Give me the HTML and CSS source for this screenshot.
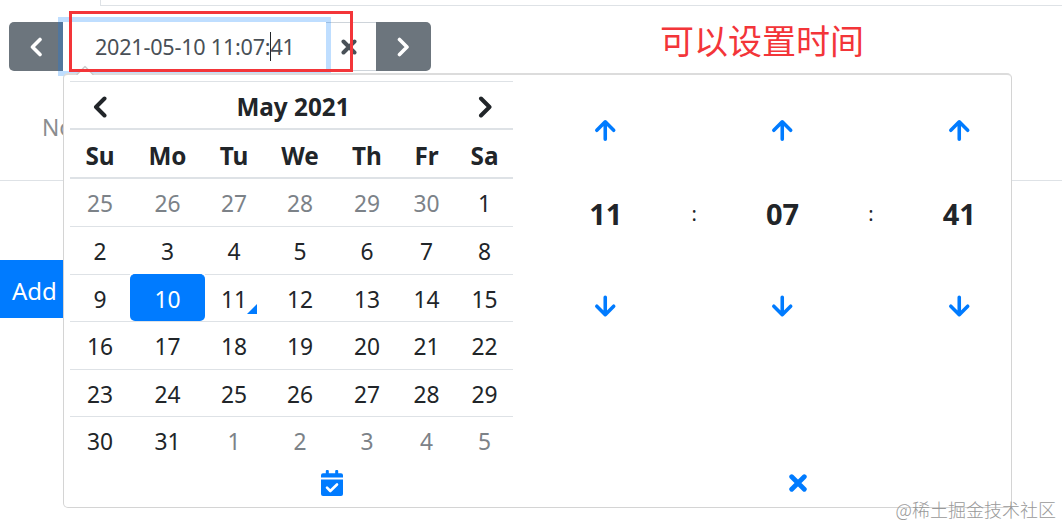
FILE: index.html
```
<!DOCTYPE html>
<html lang="en">
<head>
    <meta charset="UTF-8">
    <meta name="viewport" content="width=device-width, initial-scale=1.0">
    <title>Date Time Picker</title>
    <link rel="stylesheet" href="styles.css">
</head>
<body>

    <div class="top-line"></div>

    <div class="input-group">
        <button class="step-btn step-prev" aria-label="Previous">
            <svg width="13" height="20" viewBox="0 0 13 20"><path d="M10 2.5L2.5 10l7.5 7.5"/></svg>
        </button>
        <div class="date-input">2021-05-10 11:07:<span class="cursor"></span>41</div>
        <button class="clear-btn" aria-label="Clear">
            <svg width="16" height="16" viewBox="0 0 16 16"><path d="M2.5 2.5l11 11M13.5 2.5l-11 11"/></svg>
        </button>
        <button class="step-btn step-next" aria-label="Next">
            <svg width="13" height="20" viewBox="0 0 13 20"><path d="M2.5 2.5L10 10l-7.5 7.5"/></svg>
        </button>
    </div>

    <div class="empty-row">No</div>
    <button class="add-btn">Add</button>

    <div class="picker">
        <svg class="caret" width="18" height="10" viewBox="0 0 18 10"><path class="caret-fill" d="M1 10L9 2l8 8z"/><path class="caret-line" d="M1 9.5L9 1.5l8 8"/></svg>

        <div class="picker-body">
            <table class="calendar">
                <colgroup>
                    <col class="col-su"><col class="col-mo"><col class="col-tu"><col class="col-we"><col class="col-th"><col class="col-fr"><col class="col-sa">
                </colgroup>
                <thead>
                    <tr class="month-row">
                        <th><svg width="16" height="22" viewBox="0 0 16 22"><path d="M12.5 2.5L4 11l8.5 8.5"/></svg></th>
                        <th colspan="5">May 2021</th>
                        <th><svg width="16" height="22" viewBox="0 0 16 22"><path d="M4 2.5l8.5 8.5L4 19.5"/></svg></th>
                    </tr>
                    <tr class="week-row"><th>Su</th><th>Mo</th><th>Tu</th><th>We</th><th>Th</th><th>Fr</th><th>Sa</th></tr>
                </thead>
                <tbody>
                    <tr><td class="muted">25</td><td class="muted">26</td><td class="muted">27</td><td class="muted">28</td><td class="muted">29</td><td class="muted">30</td><td>1</td></tr>
                    <tr><td>2</td><td>3</td><td>4</td><td>5</td><td>6</td><td>7</td><td>8</td></tr>
                    <tr><td>9</td><td class="active">10</td><td class="today">11</td><td>12</td><td>13</td><td>14</td><td>15</td></tr>
                    <tr><td>16</td><td>17</td><td>18</td><td>19</td><td>20</td><td>21</td><td>22</td></tr>
                    <tr><td>23</td><td>24</td><td>25</td><td>26</td><td>27</td><td>28</td><td>29</td></tr>
                    <tr><td>30</td><td>31</td><td class="muted">1</td><td class="muted">2</td><td class="muted">3</td><td class="muted">4</td><td class="muted">5</td></tr>
                </tbody>
            </table>

            <div class="time">
                <svg class="arrow" viewBox="0 0 24 24"><path d="M12 21.5V3M3 12l9-9 9 9"/></svg>
                <span></span>
                <svg class="arrow" viewBox="0 0 24 24"><path d="M12 21.5V3M3 12l9-9 9 9"/></svg>
                <span></span>
                <svg class="arrow" viewBox="0 0 24 24"><path d="M12 21.5V3M3 12l9-9 9 9"/></svg>

                <b>11</b>
                <span>:</span>
                <b>07</b>
                <span>:</span>
                <b>41</b>

                <svg class="arrow" viewBox="0 0 24 24"><path d="M12 2.5V21M3 12l9 9 9-9"/></svg>
                <span></span>
                <svg class="arrow" viewBox="0 0 24 24"><path d="M12 2.5V21M3 12l9 9 9-9"/></svg>
                <span></span>
                <svg class="arrow" viewBox="0 0 24 24"><path d="M12 2.5V21M3 12l9 9 9-9"/></svg>
            </div>
        </div>

        <div class="picker-footer">
            <svg width="22" height="26" viewBox="0 0 22 26">
                <path class="solid" d="M0 7.5V5.3a2 2 0 0 1 2-2h2.8V1q0-1 1-1h1q1 0 1 1v2.3h6.4V1q0-1 1-1h1q1 0 1 1v2.3H20a2 2 0 0 1 2 2v2.2z"/>
                <path class="solid" d="M0 9.5h22V24a2 2 0 0 1-2 2H2a2 2 0 0 1-2-2z"/>
                <path class="check" d="M6 17.6l3.3 3.4 6.7-6.5"/>
            </svg>
            <svg class="close" width="18" height="18" viewBox="0 0 18 18"><path d="M2.7 2.7l12.6 12.6M15.3 2.7L2.7 15.3"/></svg>
        </div>
    </div>

    <!-- notes on top of the page -->
    <div class="red-box"></div>
    <div class="note">可以设置时间</div>
    <div class="watermark">@稀土掘金技术社区</div>

</body>
</html>
```
FILE: styles.css
```
* {
    box-sizing: border-box;
}

body {
    margin: 0;
    position: relative;
    width: 1062px;
    height: 526px;
    overflow: hidden;
    background: #fff;
    color: #212529;
    font-family: "Noto Sans", "Noto Sans CJK SC", sans-serif;
    font-size: 22.8px;
}

svg {
    display: block;
    fill: none;
    stroke: currentColor;
    stroke-linecap: round;
    stroke-linejoin: round;
}

button {
    border: none;
    padding: 0;
    font: inherit;
}

.top-line {
    height: 6px;
    margin-left: 100px;
    border-left: 1px solid #dee2e6;
    border-bottom: 1px solid #dee2e6;
}

/* Input with buttons */
.input-group {
    display: flex;
    width: 422px;
    height: 49px;
    margin: 16px 0 0 9px;
}

.step-btn {
    display: flex;
    align-items: center;
    justify-content: center;
    width: 55px;
    background: #6c757d;
    color: #fff;
    stroke-width: 3.6;
}

.step-prev {
    width: 54px;
    border-radius: 5px 0 0 5px;
}

.step-next {
    border-radius: 0 5px 5px 0;
}

.date-input {
    position: relative;
    display: flex;
    align-items: center;
    width: 263px;
    padding: 0 0 1px 32px;
    background: #fff;
    box-shadow: 0 0 0 5px rgba(0, 123, 255, 0.25);
    color: #495057;
    font-size: 21.6px;
    letter-spacing: -0.23px;
    white-space: pre;
}

.cursor {
    width: 1px;
    height: 29px;
    margin-right: -1px;
    background: #212529;
}

.clear-btn {
    display: flex;
    align-items: center;
    width: 50px;
    padding-left: 15px;
    border: solid #ced4da;
    border-width: 1px 0;
    background: #fff;
    color: #495057;
    stroke-width: 4;
}

/* Page behind the picker */
.empty-row {
    height: 110px;
    padding: 40px 0 0 42px;
    border-bottom: 1px solid #dee2e6;
    color: #8a8d90;
    line-height: 34px;
}

.add-btn {
    display: block;
    width: 90px;
    height: 58px;
    margin-top: 79px;
    padding: 2px 0 0 12px;
    background: #007bff;
    color: #fff;
    font-size: 24px;
    text-align: left;
}

/* Picker */
.picker {
    position: absolute;
    left: 63px;
    top: 73px;
    width: 949px;
    height: 435px;
    padding: 7px 6px 0;
    background: #fff;
    border: 1px solid #d4d4d4;
    border-top: 2px solid #dcdcdc;
    border-radius: 5px;
}

.caret {
    position: absolute;
    left: 12px;
    top: -10px;
}

.caret-fill {
    fill: #fff;
    stroke: none;
}

.caret-line {
    stroke: #ccc;
    stroke-width: 1.5;
}

.picker-body {
    display: flex;
    height: 383px;
}

.calendar {
    table-layout: fixed;
    width: 443px;
    height: 382px;
    margin-top: -1px;
    border-spacing: 0;
    text-align: center;
    line-height: 30px;
}

.col-su { width: 60px; }
.col-mo { width: 75px; }
.col-tu { width: 58px; }
.col-we { width: 74px; }
.col-th { width: 60px; }
.col-fr { width: 59px; }
.col-sa { width: 57px; }

.calendar th,
.calendar td {
    height: 47.5px;
    padding: 4px 0 0;
    border-top: 1px solid #dee2e6;
}

.calendar th {
    padding-top: 5px;
    border-bottom: 2px solid #dee2e6;
    font-size: 24.3px;
}

.calendar .month-row th {
    height: 49px;
    padding-top: 4px;
}

.calendar .week-row th {
    height: 48.5px;
    border-top: none;
}

.calendar tbody tr:first-child td {
    border-top: none;
}

.calendar th svg {
    margin: 0 auto;
    stroke-width: 4;
}

.calendar .muted {
    color: #7c8288;
}

.calendar .active {
    background: #007bff;
    border-radius: 5px;
    border-top-color: #007bff;
    color: #fff;
}

.calendar .today {
    position: relative;
}

.today::after {
    content: "";
    position: absolute;
    right: 6px;
    bottom: 7px;
    border-left: 10px solid transparent;
    border-bottom: 10px solid #007bff;
}

.time {
    display: grid;
    grid-template-columns: repeat(5, 88.4px);
    grid-template-rows: 83px 83px 103px;
    place-items: center;
    align-content: start;
    margin: 7px 0 0 48.5px;
}

.time b {
    font-size: 29px;
}

.time span {
    font-size: 20px;
}

.arrow {
    width: 22.5px;
    height: 22.5px;
    color: #007bff;
    stroke-width: 3.8;
}

.picker-footer {
    display: grid;
    grid-template-columns: 1fr 1fr;
    justify-items: center;
    align-items: center;
    width: 932px;
    height: 36px;
    margin-left: 29px;
    color: #007bff;
}

.solid {
    fill: currentColor;
    stroke: none;
}

.check {
    stroke: #fff;
    stroke-width: 2.6;
}

.close {
    stroke-width: 4.8;
}

/* Notes */
.red-box {
    position: absolute;
    left: 69px;
    top: 11px;
    width: 284px;
    height: 61px;
    border: 3px solid #f33539;
}

.note {
    position: absolute;
    left: 660px;
    top: 15px;
    color: #f33539;
    font-family: "Noto Sans CJK SC", sans-serif;
    font-size: 34px;
    line-height: 50px;
}

.watermark {
    position: absolute;
    right: 6px;
    top: 496px;
    color: #999;
    font-family: "Noto Sans CJK SC", sans-serif;
    font-size: 18px;
    font-weight: 300;
    line-height: 26px;
}
```
